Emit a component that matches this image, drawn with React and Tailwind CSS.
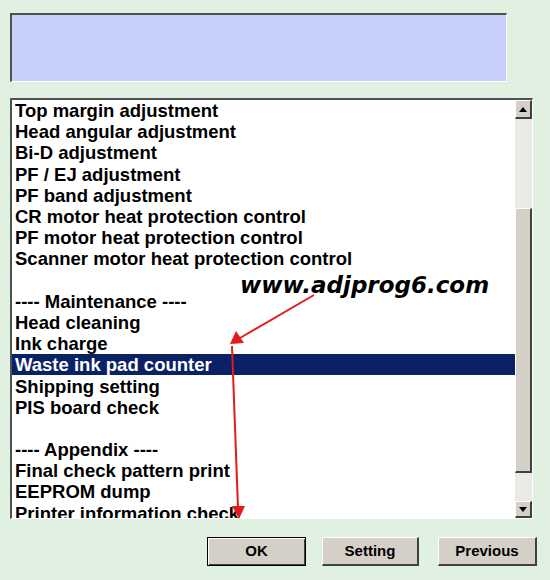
import React from "react";

const items = [
  "Top margin adjustment",
  "Head angular adjustment",
  "Bi-D adjustment",
  "PF / EJ adjustment",
  "PF band adjustment",
  "CR motor heat protection control",
  "PF motor heat protection control",
  "Scanner motor heat protection control",
  "",
  "---- Maintenance ----",
  "Head cleaning",
  "Ink charge",
  "Waste ink pad counter",
  "Shipping setting",
  "PIS board check",
  "",
  "---- Appendix ----",
  "Final check pattern print",
  "EEPROM dump",
  "Printer information check",
];

function Btn({ children, def }) {
  return (
    <div
      className={
        "h-[29px] flex items-center justify-center bg-[#d4d0c8] text-[15px] font-bold text-black " +
        (def
          ? "w-[99px] border border-black shadow-[inset_1px_1px_0_#ffffff,inset_-1px_-1px_0_#404040]"
          : "border-t border-l border-t-white border-l-white border-b-2 border-r-2 border-b-[#404040] border-r-[#404040]")
      }
      style={{ fontFamily: '"Liberation Sans", Arial, sans-serif' }}
    >
      {children}
    </div>
  );
}

export default function App() {
  return (
    <div
      className="relative w-[550px] h-[580px] bg-[#e1f1e1] overflow-hidden pt-[13px] pl-[10px]"
      style={{ fontFamily: '"Liberation Sans", Arial, sans-serif' }}
    >
      <div className="w-[497px] h-[69px] bg-[#c6d0fa] border-t-2 border-l-2 border-t-[#505050] border-l-[#505050] border-b border-r border-b-white border-r-white" />
      <div className="mt-[16px] w-[523px] h-[421px] bg-white border-t-2 border-l-2 border-t-[#505050] border-l-[#505050] border-b border-r border-b-white border-r-white flex overflow-hidden">
        <div className="w-[504px] h-full overflow-hidden">
          {items.map((t, i) => (
            <div
              key={i}
              className={
                "h-[21.2px] shrink-0 flex items-center pl-[3px] text-[18.5px] leading-[21px] font-bold whitespace-nowrap " +
                (t === "Waste ink pad counter" ? "bg-[#0a2265] text-white" : "text-black")
              }
            >
              {t}
            </div>
          ))}
        </div>
        <div className="w-[17px] h-full flex flex-col bg-[#eaeae6]">
          <div className="h-[19px] shrink-0 bg-[#d4d0c8] border-t border-l border-t-white border-l-white border-b-2 border-r-2 border-b-[#404040] border-r-[#404040] flex items-center justify-center">
            <svg width="8" height="5" viewBox="0 0 8 5"><path d="M0 5 L4 0 L8 5 Z" fill="#000" /></svg>
          </div>
          <div className="h-[89px] shrink-0" />
          <div className="h-[265px] shrink-0 bg-[#d4d0c8] border-t border-l border-t-white border-l-white border-b-2 border-r-2 border-b-[#404040] border-r-[#404040]" />
          <div className="flex-1" />
          <div className="h-[17px] shrink-0 bg-[#d4d0c8] border-t border-l border-t-white border-l-white border-b-2 border-r-2 border-b-[#404040] border-r-[#404040] flex items-center justify-center">
            <svg width="8" height="5" viewBox="0 0 8 5"><path d="M0 0 L4 5 L8 0 Z" fill="#000" /></svg>
          </div>
        </div>
      </div>
      <div className="mt-[18px] flex pl-[197px] gap-[16px]">
        <Btn def>OK</Btn>
        <div className="w-[97px]"><Btn>Setting</Btn></div>
        <div className="w-[99px] ml-[3px]"><Btn>Previous</Btn></div>
      </div>

      <div
        className="absolute left-[240px] top-[271px] text-[23px] font-bold italic text-black leading-[28px] whitespace-nowrap"
        style={{ fontFamily: '"DejaVu Sans", Verdana, sans-serif' }}
      >
        www.adjprog6.com
      </div>
      <svg className="absolute left-0 top-0 pointer-events-none" width="550" height="580">
        <line x1="314" y1="295" x2="240" y2="338" stroke="#e21b1b" strokeWidth="2" />
        <path d="M230 344 L236 331 L244 343 Z" fill="#e21b1b" />
        <line x1="232" y1="346" x2="238" y2="508" stroke="#e21b1b" strokeWidth="2" />
        <path d="M232 506 L245 506 L239 519 Z" fill="#e21b1b" />
      </svg>
    </div>
  );
}
